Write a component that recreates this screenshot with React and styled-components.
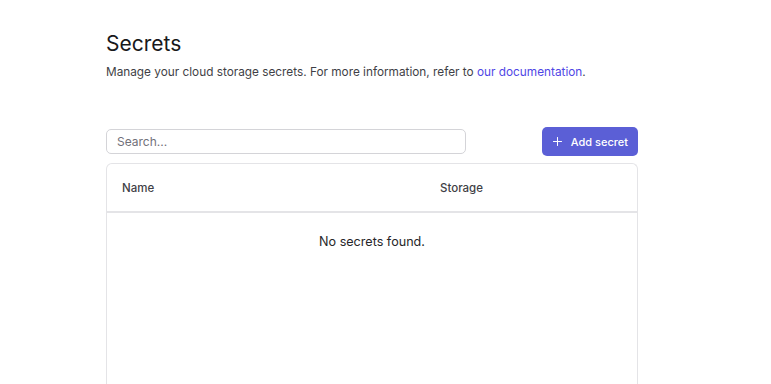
import styled, { createGlobalStyle } from "styled-components";

const GlobalStyle = createGlobalStyle`
  body {
    margin: 0;
    background: #ffffff;
    font-family: Inter, "Noto Sans", sans-serif;
    color: #18181b;
  }
`;

const Page = styled.div`
  padding: 30px 0 0 106px;
  width: 532px;
`;

const Title = styled.h1`
  margin: 0;
  font-size: 21px;
  line-height: 28px;
  font-weight: 400;
  color: #18181b;
`;

const Subtitle = styled.p`
  margin: 5px 0 0;
  font-size: 11.8px;
  line-height: 18px;
  color: #3f3f46;
`;

const DocLink = styled.a`
  color: #4f46e5;
  text-decoration: none;
`;

const Toolbar = styled.div`
  display: flex;
  align-items: center;
  justify-content: space-between;
  margin-top: 46px;
`;

const SearchInput = styled.input`
  box-sizing: border-box;
  width: 360px;
  height: 25px;
  padding: 0 10px;
  border: 1px solid #d4d4d8;
  border-radius: 5px;
  font-family: inherit;
  font-size: 12px;
  color: #18181b;
  outline: none;
  &::placeholder {
    color: #71717a;
  }
`;

const AddButton = styled.button`
  display: flex;
  align-items: center;
  gap: 9px;
  height: 29px;
  padding: 0 10px 0 11px;
  border: none;
  border-radius: 5px;
  background: #5b5fd6;
  color: #ffffff;
  font-family: inherit;
  font-size: 11px;
  font-weight: 500;
  cursor: pointer;
`;

const Card = styled.div`
  margin-top: 7px;
  border: 1px solid #e4e4e7;
  border-bottom: none;
  border-radius: 6px 6px 0 0;
  height: 220px;
`;

const Table = styled.table`
  width: 100%;
  border-collapse: collapse;
`;

const Th = styled.th`
  width: ${(p) => p.$width || "auto"};
  height: 47px;
  padding: 0 15px;
  text-align: left;
  font-size: 11.5px;
  font-weight: 500;
  color: #3f3f46;
  border-bottom: 2px solid #e4e4e7;
`;

const EmptyCell = styled.td`
  padding: 20px 0;
  text-align: center;
  font-size: 12.6px;
  line-height: 18px;
  color: #27272a;
`;

const PlusIcon = () => (
  <svg width="9" height="9" viewBox="0 0 10 10" fill="none">
    <path d="M5 0.5v9M0.5 5h9" stroke="#fff" strokeWidth="1.1" strokeLinecap="round" />
  </svg>
);

export default function App() {
  return (
    <>
      <GlobalStyle />
      <Page>
        <Title>Secrets</Title>
        <Subtitle>
          Manage your cloud storage secrets. For more information, refer to{" "}
          <DocLink href="#">our documentation</DocLink>.
        </Subtitle>
        <Toolbar>
          <SearchInput placeholder="Search..." />
          <AddButton>
            <PlusIcon />
            Add secret
          </AddButton>
        </Toolbar>
        <Card>
          <Table>
            <thead>
              <tr>
                <Th $width="60%">Name</Th>
                <Th>Storage</Th>
              </tr>
            </thead>
            <tbody>
              <tr>
                <EmptyCell colSpan={2}>No secrets found.</EmptyCell>
              </tr>
            </tbody>
          </Table>
        </Card>
      </Page>
    </>
  );
}
